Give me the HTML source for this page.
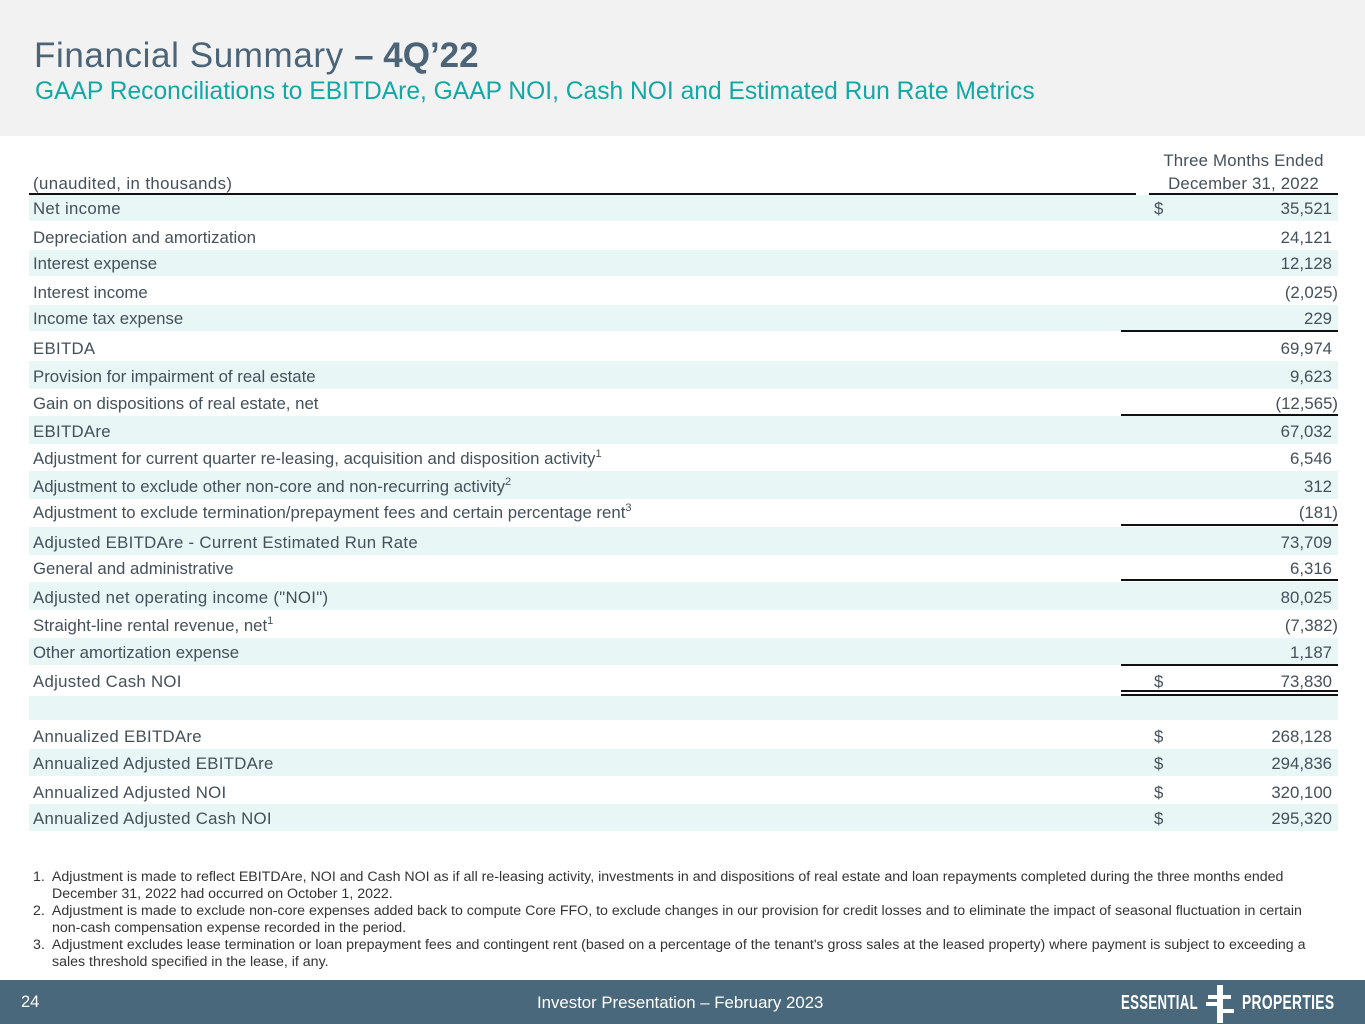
<!DOCTYPE html>
<html><head><meta charset="utf-8"><style>
*{margin:0;padding:0;box-sizing:border-box}
body{width:1365px;height:1024px;position:relative;background:#fff;font-family:"Liberation Sans",sans-serif;color:#44505a;overflow:hidden}
.hdr{position:absolute;left:0;top:0;width:1365px;height:136px;background:#f2f2f2}
.t1{position:absolute;left:34px;top:36px;font-size:35px;color:#4b6478;letter-spacing:0.6px;white-space:nowrap}
.t1 b{font-weight:bold;letter-spacing:0}
.t2{position:absolute;left:35px;top:78px;font-size:24.6px;color:#13a8a6;white-space:nowrap}
.row{position:absolute;left:29px;width:1309px;font-size:16.8px;line-height:1}
.sh{background:#e8f6f6}
.lab{position:absolute;left:4px;white-space:nowrap}
.ls{letter-spacing:0.3px}
.dol{position:absolute;left:1125px}
.val{position:absolute;right:6px}
.val.p{right:0}
.ln{position:absolute;left:1121px;width:217px;height:2px;background:#111}
sup{font-size:11px;vertical-align:top;position:relative;top:-2px}
.fn{position:absolute;left:33px;top:869px;width:1280px;font-size:14.2px;line-height:17px;color:#333}
.fn div{padding-left:19px;text-indent:-19px}
.foot{position:absolute;left:0;top:980px;width:1365px;height:44px;background:#4a687b;color:#fff}
</style></head><body>
<div class="hdr"></div>
<div class="t1">Financial Summary <b>– 4Q’22</b></div>
<div class="t2">GAAP Reconciliations to EBITDAre, GAAP NOI, Cash NOI and Estimated Run Rate Metrics</div>

<div style="position:absolute;left:33px;top:174px;font-size:16.8px;letter-spacing:0.4px">(unaudited, in thousands)</div>
<div style="position:absolute;left:1139px;width:209px;top:149px;font-size:16.8px;text-align:center;line-height:23px;letter-spacing:0.2px">Three Months Ended<br>December 31, 2022</div>
<div style="position:absolute;left:29px;top:193px;width:1107px;height:2px;background:#111"></div>
<div style="position:absolute;left:1149px;top:193px;width:189px;height:2px;background:#111"></div>

<div class="row sh" style="top:195px;height:26px"><span class="lab ls" style="top:6px">Net income</span><span class="dol" style="top:6px">$</span><span class="val" style="top:6px">35,521</span></div>
<div class="row" style="top:221px;height:29px"><span class="lab" style="top:9px">Depreciation and amortization</span><span class="val" style="top:9px">24,121</span></div>
<div class="row sh" style="top:250px;height:26px"><span class="lab" style="top:6px">Interest expense</span><span class="val" style="top:6px">12,128</span></div>
<div class="row" style="top:276px;height:29px"><span class="lab" style="top:9px">Interest income</span><span class="val p" style="top:9px">(2,025)</span></div>
<div class="row sh" style="top:305px;height:26px"><span class="lab" style="top:6px">Income tax expense</span><span class="val" style="top:6px">229</span></div>
<div class="ln" style="top:330px"></div>
<div class="row" style="top:332px;height:29px"><span class="lab ls" style="top:9px">EBITDA</span><span class="val" style="top:9px">69,974</span></div>
<div class="row sh" style="top:361px;height:28px"><span class="lab" style="top:8px">Provision for impairment of real estate</span><span class="val" style="top:8px">9,623</span></div>
<div class="row" style="top:389px;height:26px"><span class="lab" style="top:7px">Gain on dispositions of real estate, net</span><span class="val p" style="top:7px">(12,565)</span></div>
<div class="ln" style="top:414px"></div>
<div class="row sh" style="top:416px;height:28px"><span class="lab ls" style="top:8px">EBITDAre</span><span class="val" style="top:8px">67,032</span></div>
<div class="row" style="top:444px;height:27px"><span class="lab" style="top:7px">Adjustment for current quarter re-leasing, acquisition and disposition activity<sup>1</sup></span><span class="val" style="top:7px">6,546</span></div>
<div class="row sh" style="top:471px;height:28px"><span class="lab" style="top:8px">Adjustment to exclude other non-core and non-recurring activity<sup>2</sup></span><span class="val" style="top:8px">312</span></div>
<div class="row" style="top:499px;height:26px"><span class="lab" style="top:6px">Adjustment to exclude termination/prepayment fees and certain percentage rent<sup>3</sup></span><span class="val p" style="top:6px">(181)</span></div>
<div class="ln" style="top:524px"></div>
<div class="row sh" style="top:527px;height:28px"><span class="lab ls" style="top:8px">Adjusted EBITDAre - Current Estimated Run Rate</span><span class="val" style="top:8px">73,709</span></div>
<div class="row" style="top:555px;height:25px"><span class="lab" style="top:6px">General and administrative</span><span class="val" style="top:6px">6,316</span></div>
<div class="ln" style="top:579px"></div>
<div class="row sh" style="top:582px;height:28px"><span class="lab ls" style="top:8px">Adjusted net operating income ("NOI")</span><span class="val" style="top:8px">80,025</span></div>
<div class="row" style="top:610px;height:28px"><span class="lab" style="top:8px">Straight-line rental revenue, net<sup>1</sup></span><span class="val p" style="top:8px">(7,382)</span></div>
<div class="row sh" style="top:638px;height:27px"><span class="lab" style="top:7px">Other amortization expense</span><span class="val" style="top:7px">1,187</span></div>
<div class="ln" style="top:664px"></div>
<div class="row" style="top:666px;height:25px"><span class="lab ls" style="top:8px">Adjusted Cash NOI</span><span class="dol" style="top:8px">$</span><span class="val" style="top:8px">73,830</span></div>
<div class="ln" style="top:690px"></div>
<div class="ln" style="top:694px"></div>
<div class="row sh" style="top:696px;height:24px"></div>
<div class="row" style="top:720px;height:29px"><span class="lab ls" style="top:9px">Annualized EBITDAre</span><span class="dol" style="top:9px">$</span><span class="val" style="top:9px">268,128</span></div>
<div class="row sh" style="top:749px;height:27px"><span class="lab ls" style="top:7px">Annualized Adjusted EBITDAre</span><span class="dol" style="top:7px">$</span><span class="val" style="top:7px">294,836</span></div>
<div class="row" style="top:776px;height:28px"><span class="lab ls" style="top:9px">Annualized Adjusted NOI</span><span class="dol" style="top:9px">$</span><span class="val" style="top:9px">320,100</span></div>
<div class="row sh" style="top:804px;height:27px"><span class="lab ls" style="top:7px">Annualized Adjusted Cash NOI</span><span class="dol" style="top:7px">$</span><span class="val" style="top:7px">295,320</span></div>

<div class="fn">
<div>1.&nbsp; Adjustment is made to reflect EBITDAre, NOI and Cash NOI as if all re-leasing activity, investments in and dispositions of real estate and loan repayments completed during the three months ended December 31, 2022 had occurred on October 1, 2022.</div>
<div>2.&nbsp; Adjustment is made to exclude non-core expenses added back to compute Core FFO, to exclude changes in our provision for credit losses and to eliminate the impact of seasonal fluctuation in certain non&#8209;cash compensation expense recorded in the period.</div>
<div>3.&nbsp; Adjustment excludes lease termination or loan prepayment fees and contingent rent (based on a percentage of the tenant's gross sales at the leased property) where payment is subject to exceeding a sales threshold specified in the lease, if any.</div>
</div>

<div class="foot">
<div style="position:absolute;left:21px;top:13px;font-size:16.5px">24</div>
<div style="position:absolute;left:537px;top:13px;font-size:16.8px">Investor Presentation – February 2023</div>
<div style="position:absolute;left:1121px;top:12px;font-size:20px;font-weight:bold;transform:scaleX(0.66);transform-origin:left;white-space:nowrap;letter-spacing:0.5px">ESSENTIAL</div>
<svg style="position:absolute;left:1205px;top:5px" width="32" height="38" viewBox="0 0 32 38">
<rect x="12" y="0" width="6" height="38" fill="#fff"/>
<rect x="3" y="10" width="15" height="4" fill="#fff"/>
<rect x="1" y="17" width="17" height="4" fill="#fff"/>
<rect x="12" y="24" width="17" height="4" fill="#fff"/>
<rect x="12" y="10" width="14" height="4" fill="#fff"/>
</svg>
<div style="position:absolute;left:1242px;top:12px;font-size:20px;font-weight:bold;transform:scaleX(0.69);transform-origin:left;white-space:nowrap;letter-spacing:0.5px">PROPERTIES</div>
</div>
</body></html>
